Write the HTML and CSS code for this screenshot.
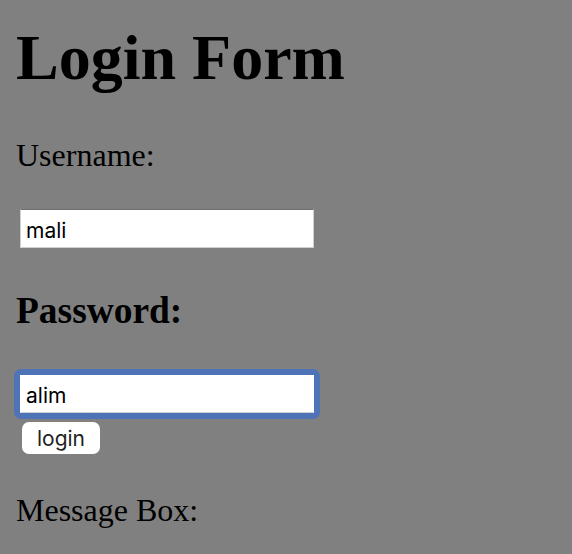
FILE: index.html
```html
<!DOCTYPE html>
<html>
<head>
<meta charset="utf-8">
<link rel="stylesheet" href="styles.css">
<title>Login Form</title>
</head>
<body>
<h1 class="title">Login Form</h1>
<p class="label">Username:</p>
<input class="field field-user" type="text" value="mali">
<h3 class="label-bold">Password:</h3>
<span class="focus-ring"><input class="field" type="text" value="alim"></span>
<button class="btn" type="button">login</button>
<p class="label label-msg">Message Box:</p>
</body>
</html>
```
FILE: styles.css
```css
html, body {
  margin: 0;
  padding: 0;
  background: #808080;
}
body {
  padding: 0 16px;
  font-family: "Liberation Serif", "Times New Roman", serif;
  color: #000;
}
.title {
  margin: 21px 0 0;
  font-size: 64px;
  line-height: 74px;
  font-weight: bold;
}
.label {
  margin: 42px 0 0;
  font-size: 32px;
  line-height: 37px;
}
.field {
  display: block;
  box-sizing: border-box;
  width: 294px;
  height: 39px;
  margin: 0;
  padding: 3px 5px 0;
  background: #fff;
  border: 1px solid #cfcfcf;
  border-top-color: #6e6e6e;
  border-radius: 0;
  font-family: "Inter", "Liberation Sans", sans-serif;
  font-size: 21px;
  color: #000;
  outline: none;
}
.field-user {
  margin: 35px 0 0 4px;
}
.label-bold {
  margin: 41px 0 0;
  font-size: 37.44px;
  line-height: 43px;
  font-weight: bold;
}
.focus-ring {
  display: block;
  width: 294px;
  margin: 37px 0 0 -2px;
  padding: 6px;
  background: #4f73b7;
  border-radius: 7px;
}
.focus-ring .field {
  height: 38px;
  border-color: #fff;
  border-bottom-color: #cfcfcf;
}
.btn {
  display: block;
  width: 78px;
  height: 32px;
  margin: 3px 0 0 6px;
  padding: 1px 0 0;
  background: #fff;
  border: none;
  border-radius: 7px;
  font-family: "Inter", "Liberation Sans", sans-serif;
  font-size: 21px;
  color: #222;
}
.label-msg {
  margin-top: 38px;
}
```
